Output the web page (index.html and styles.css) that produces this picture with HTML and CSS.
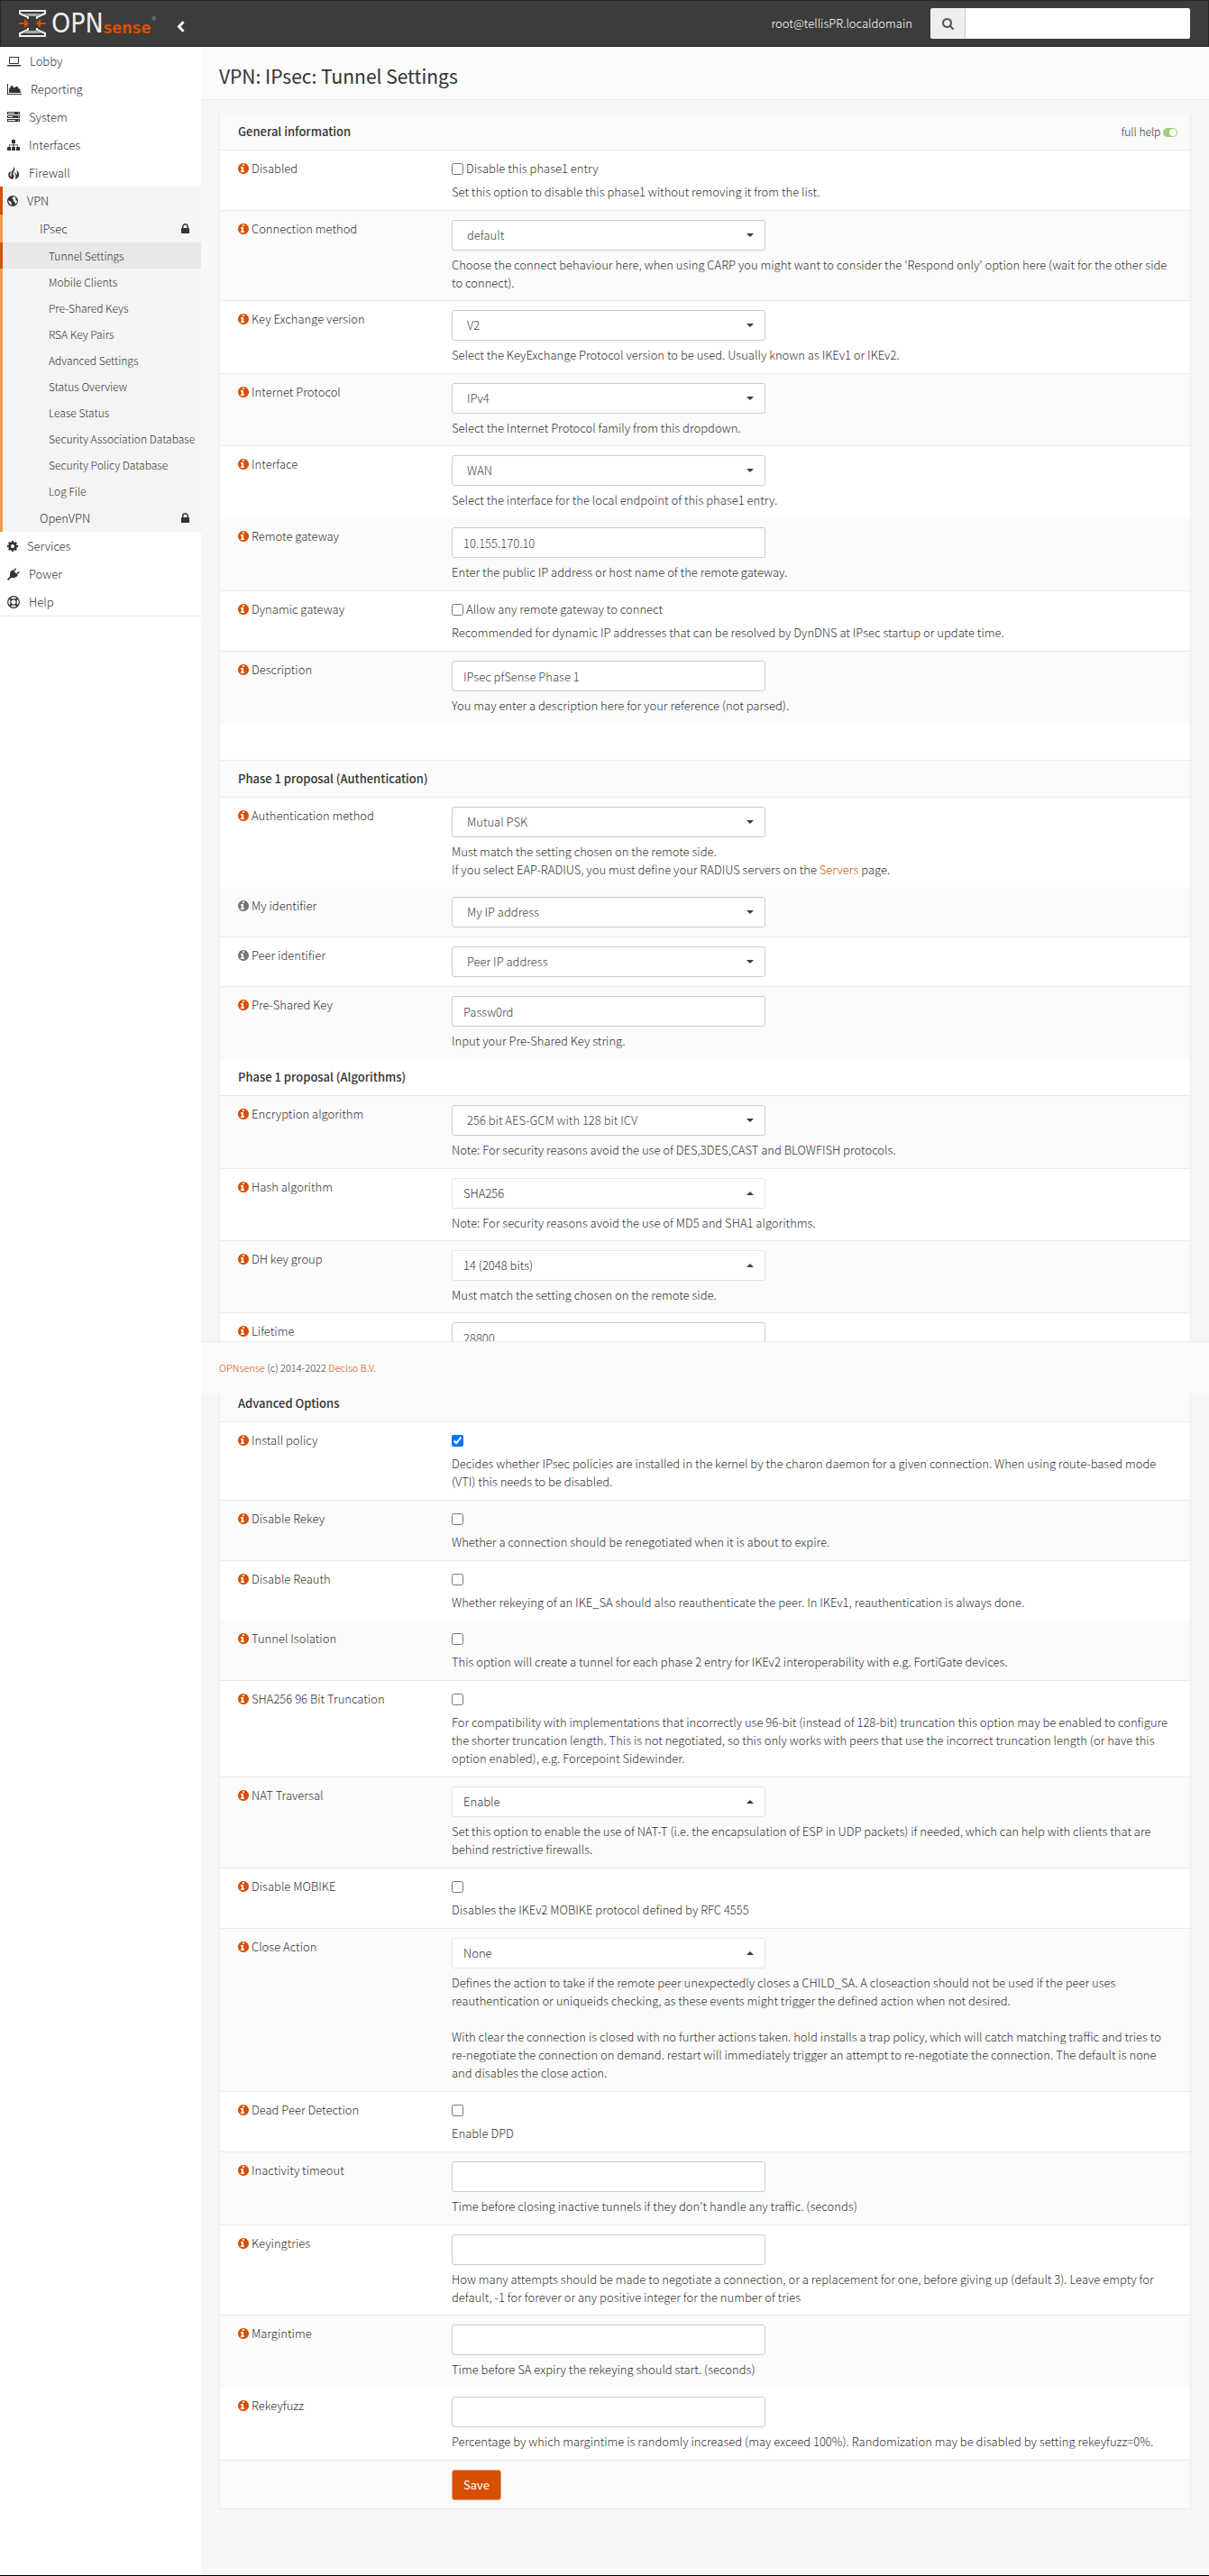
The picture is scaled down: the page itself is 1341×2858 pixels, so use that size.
FILE: index.html
```html
<!DOCTYPE html>
<html lang="en">
	<head>
		<meta charset="UTF-8">
		<meta name="viewport" content="width=device-width, initial-scale=1">

		<title>Tunnel Settings | IPsec | VPN | OPNsense</title>

		<link rel="stylesheet" href="styles.css">
	</head>

	<body>
		<!-- icon sprite -->
		<svg class="sprite" xmlns="http://www.w3.org/2000/svg">
			<symbol id="info" viewBox="128 128 1536 1536"><path d="M1024 1376v-160q0-14-9-23t-23-9h-96v-512q0-14-9-23t-23-9h-320q-14 0-23 9t-9 23v160q0 14 9 23t23 9h96v320h-96q-14 0-23 9t-9 23v160q0 14 9 23t23 9h448q14 0 23-9t9-23zM1024 480v-160q0-14-9-23t-23-9h-192q-14 0-23 9t-9 23v160q0 14 9 23t23 9h192q14 0 23-9t9-23zM1664 896q0 209-103 385.500t-279.500 279.500-385.500 103-385.500-103-279.500-279.500-103-385.500 103-385.500 279.500-279.500 385.500-103 385.500 103 279.500 279.500 103 385.500z"/></symbol>
			<symbol id="lock" viewBox="320 128 1152 1408"><path d="M640 768h512v-192q0-106-75-181t-181-75-181 75-75 181v192zM1472 864v576q0 40-28 68t-68 28h-960q-40 0-68-28t-28-68v-576q0-40 28-68t68-28h32v-192q0-184 132-316t316-132 316 132 132 316v192h32q40 0 68 28t28 68z"/></symbol>
			<symbol id="search" viewBox="64 128 1664 1664"><path d="M1216 832q0-185-131.500-316.500t-316.500-131.500-316.500 131.500-131.500 316.500 131.500 316.500 316.500 131.500 316.500-131.500 131.500-316.500zM1728 1664q0 52-38 90t-90 38q-54 0-90-38l-343-342q-179 124-399 124-143 0-273.500-55.500t-225-150-150-225-55.500-273.500 55.500-273.500 150-225 225-150 273.500-55.500 273.500 55.500 225 150 150 225 55.500 273.500q0 220-124 399l343 343q37 37 37 90z"/></symbol>
			<symbol id="cog" viewBox="128 128 1536 1536"><path d="M1152 896q0-106-75-181t-181-75-181 75-75 181 75 181 181 75 181-75 75-181zM1664 787v222q0 12-8 23t-20 13l-185 28q-19 54-39 91 35 50 107 138 10 12 10 25t-9 23q-27 37-99 108t-94 71q-12 0-26-9l-138-108q-44 23-91 38-16 136-29 186-7 28-36 28h-222q-14 0-24.500-8.500t-11.500-21.500l-28-184q-49-16-90-37l-141 107q-10 9-25 9-14 0-25-11-126-114-165-168-7-10-7-23 0-12 8-23 15-21 51-66.500t54-70.500q-27-50-41-99l-183-27q-13-2-21-12.500t-8-23.500v-222q0-12 8-23t19-13l186-28q14-46 39-92-40-57-107-138-10-12-10-24 0-10 9-23 26-36 98.500-107.500t94.500-71.500q13 0 26 10l138 107q44-23 91-38 16-136 29-186 7-28 36-28h222q14 0 24.500 8.500t11.500 21.500l28 184q49 16 90 37l142-107q9-9 24-9 13 0 25 10 129 119 165 170 7 8 7 22 0 12-8 23-15 21-51 66.500t-54 70.500q26 50 41 98l183 28q13 2 21 12.500t8 23.500z"/></symbol>
			<symbol id="laptop" viewBox="0 0 15 12"><path fill-rule="evenodd" d="M3 1h9a1 1 0 0 1 1 1v6a1 1 0 0 1-1 1H3a1 1 0 0 1-1-1V2a1 1 0 0 1 1-1zm0 1v6h9V2zM0 10h15v1q0 .6-1 .6H1Q0 11.600 0 11z"/></symbol>
			<symbol id="chart" viewBox="0 0 16 12"><path d="M0 0h1v11h15v1H0zM2 10V6l3-4.500L7.500 4.500 11 2.500l2 3h1L15 10z"/></symbol>
			<symbol id="server" viewBox="0 0 14 11"><path fill-rule="evenodd" d="M0 0h14v3H0zm1 1v1h7V1zm11 0v1h1V1zM0 4h14v3H0zm1 1v1h5V5zm11 0v1h1V5zM0 8h14v3H0zm1 1v1h8V9zm11 0v1h1V9z"/></symbol>
			<symbol id="sitemap" viewBox="0 0 14 12"><path d="M5 .5Q5 0 5.500 0h3q.5 0 .5.500v3q0 .5-.5.500h-1v1.500H12V8h1.500q.5 0 .5.500v3q0 .5-.5.500h-3q-.5 0-.5-.5v-3q0-.5.5-.5h.8V6.200H7.500V8h1q.5 0 .5.500v3q0 .5-.5.500h-3q-.5 0-.5-.5v-3q0-.5.500-.5h1V6.200H2.700V8h.8q.5 0 .5.500v3q0 .5-.5.500h-3q-.5 0-.5-.5v-3Q0 8 .5 8H2V5.500h4.500V4h-1Q5 4 5 3.500z"/></symbol>
			<symbol id="fire" viewBox="0 0 14 14"><path d="M7.200 0c2 2 1.300 3.600.2 5C6.300 6.500 6 8 7.500 9.800 7.800 11.500 7 13 5.500 14 2.500 13 1 11 1.200 8.700 1.400 7 2.500 6 3 4.500c1 1.500.6 2.800.2 3.900-.4 1.300.3 2.300 1.300 2.800C5 9.500 4 8 4.700 6 5.400 4.100 7.800 3 7.200 0zM10 3.500c2.500 2 3.500 4 3 6.200-.5 2.200-2.200 3.500-4.500 4.300.6-1.200 1.200-2.600.8-4.300C9 8.200 7.500 7.500 8.800 5.500c.2 1.800 1.200 2.300 1.400 4 1.300-2 .8-3.800-.2-6z"/></symbol>
			<symbol id="globe" viewBox="0 0 12 12"><path fill-rule="evenodd" d="M6 0a6 6 0 1 1 0 12A6 6 0 0 1 6 0zm.8 1.200L5.200 2.700 6 4l1.200.5L6.600 6l1.600 1 .9 1.200L8.500 10c1.500-.8 2.400-2.300 2.400-4L9.600 5 9 3.200l.8-.7c-.8-.8-1.800-1.200-3-1.300zM1.300 4.700l.2 2.600L3.700 10l1.500.9L4.600 9l.3-1.500L3 6.400z"/></symbol>
			<symbol id="plug" viewBox="0 0 14 14"><path d="M9.300.3l.9.9-2.600 2.700 2.500 2.500 2.700-2.600.9.900-2.600 2.700.8.800-1.300 1.300c-1.600 1.600-4 2-5.900 1.200L1.200 14 0 12.800l3.300-3.500C2.500 7.400 2.900 5 4.500 3.400L5.800 2.100l.8.800z"/></symbol>
			<symbol id="help" viewBox="0 0 14 14"><g fill="none" stroke="currentColor"><circle cx="7" cy="7" r="6.300" stroke-width="1.200"/><circle cx="7" cy="7" r="3.200" stroke-width="1.200"/><path stroke-width="2.200" d="M2.900 2.900l2 2M9.100 9.100l2 2M11.100 2.900l-2 2M4.900 9.100l-2 2"/></g></symbol>
			<symbol id="toggle" viewBox="0 0 16 10"><rect width="16" height="10" rx="5"/><circle cx="11" cy="5" r="4" fill="#fff"/></symbol>
		</svg>

		<header class="page-head">
			<a href="#" class="logo" aria-label="OPNsense">
				<svg class="logo-mark" viewBox="0 0 30 30">
					<path fill="#a9a9a8" d="M5 4h20l-6 3h-8zM11 23h8l6 3H5z"/>
					<path fill="none" stroke="#eee" stroke-width="2" d="M20 10V8l9-4V1H1v3l9 4v2M20 20v2l9 4v3H1v-3l9-4v-2"/>
					<path fill="#d94f00" d="M0 14h6v-4l5 5-5 5v-4H0zM30 14h-6v-4l-5 5 5 5v-4h6z"/>
				</svg>
				<span class="logo-opn">OPN</span><span class="logo-sense">sense</span><span class="logo-reg">®</span>
			</a>
			<button type="button" class="toggle-sidebar" aria-label="Toggle sidebar">
				<svg width="9" height="13" viewBox="0 0 9 13"><path fill="none" stroke="#fff" stroke-width="3" d="M7.500 1.200L2.500 6.500l5 5.300"/></svg>
			</button>
			<span class="user">root@tellisPR.localdomain</span>
			<div class="search">
				<label for="menu-search"><svg class="icon" width="13" height="13"><use href="#search"/></svg></label>
				<input type="text" id="menu-search" aria-label="Search">
			</div>
		</header>

		<div class="page-wrapper">
			<nav class="sidebar">
				<a href="#" class="item"><svg class="icon" width="15" height="12"><use href="#laptop"/></svg>Lobby</a>
				<a href="#" class="item"><svg class="icon" width="16" height="12"><use href="#chart"/></svg>Reporting</a>
				<a href="#" class="item"><svg class="icon" width="14" height="11"><use href="#server"/></svg>System</a>
				<a href="#" class="item"><svg class="icon" width="14" height="12"><use href="#sitemap"/></svg>Interfaces</a>
				<a href="#" class="item"><svg class="icon" width="14" height="14"><use href="#fire"/></svg>Firewall</a>
				<a href="#" class="item active"><svg class="icon" width="12" height="12"><use href="#globe"/></svg>VPN</a>
				<div class="submenu">
					<a href="#" class="item sub">IPsec<svg class="icon" width="9" height="11"><use href="#lock"/></svg></a>
					<a href="#" class="item leaf active">Tunnel Settings</a>
					<a href="#" class="item leaf">Mobile Clients</a>
					<a href="#" class="item leaf">Pre-Shared Keys</a>
					<a href="#" class="item leaf">RSA Key Pairs</a>
					<a href="#" class="item leaf">Advanced Settings</a>
					<a href="#" class="item leaf">Status Overview</a>
					<a href="#" class="item leaf">Lease Status</a>
					<a href="#" class="item leaf">Security Association Database</a>
					<a href="#" class="item leaf">Security Policy Database</a>
					<a href="#" class="item leaf">Log File</a>
					<a href="#" class="item sub">OpenVPN<svg class="icon" width="9" height="11"><use href="#lock"/></svg></a>
				</div>
				<a href="#" class="item"><svg class="icon" width="12" height="12"><use href="#cog"/></svg>Services</a>
				<a href="#" class="item"><svg class="icon" width="14" height="14"><use href="#plug"/></svg>Power</a>
				<a href="#" class="item"><svg class="icon" width="14" height="14"><use href="#help"/></svg>Help</a>
			</nav>

			<main class="page-content">
				<div class="content-head">
					<h1>VPN: IPsec: Tunnel Settings</h1>
				</div>

				<form class="content-box" action="#">
					<!-- phase 1 -->
					<section class="form-table">
						<div class="row heading">
							<h2>General information</h2>
							<a href="#" class="full-help">full help <svg width="16" height="10"><use href="#toggle"/></svg></a>
						</div>
						<div class="row">
							<div class="name"><a href="#" class="showhelp" aria-label="Help"><svg class="icon" width="12" height="12"><use href="#info"/></svg></a>Disabled</div>
							<div class="field">
								<label class="check"><input type="checkbox">Disable this phase1 entry</label>
								<p>Set this option to disable this phase1 without removing it from the list.</p>
							</div>
						</div>
						<div class="row slim">
							<div class="name"><a href="#" class="showhelp" aria-label="Help"><svg class="icon" width="12" height="12"><use href="#info"/></svg></a><label for="auto">Connection method</label></div>
							<div class="field">
								<select id="auto" class="picker"><option>default</option></select>
								<p>Choose the connect behaviour here, when using CARP you might want to consider the 'Respond only' option here (wait for the other side to connect).</p>
							</div>
						</div>
						<div class="row">
							<div class="name"><a href="#" class="showhelp" aria-label="Help"><svg class="icon" width="12" height="12"><use href="#info"/></svg></a><label for="iketype">Key Exchange version</label></div>
							<div class="field">
								<select id="iketype" class="picker"><option>V2</option></select>
								<p>Select the KeyExchange Protocol version to be used. Usually known as IKEv1 or IKEv2.</p>
							</div>
						</div>
						<div class="row slim">
							<div class="name"><a href="#" class="showhelp" aria-label="Help"><svg class="icon" width="12" height="12"><use href="#info"/></svg></a><label for="protocol">Internet Protocol</label></div>
							<div class="field">
								<select id="protocol" class="picker"><option>IPv4</option></select>
								<p>Select the Internet Protocol family from this dropdown.</p>
							</div>
						</div>
						<div class="row">
							<div class="name"><a href="#" class="showhelp" aria-label="Help"><svg class="icon" width="12" height="12"><use href="#info"/></svg></a><label for="interface">Interface</label></div>
							<div class="field">
								<select id="interface" class="picker"><option>WAN</option></select>
								<p>Select the interface for the local endpoint of this phase1 entry.</p>
							</div>
						</div>
						<div class="row no-line">
							<div class="name"><a href="#" class="showhelp" aria-label="Help"><svg class="icon" width="12" height="12"><use href="#info"/></svg></a><label for="remotegw">Remote gateway</label></div>
							<div class="field">
								<input type="text" id="remotegw" value="10.155.170.10">
								<p>Enter the public IP address or host name of the remote gateway.</p>
							</div>
						</div>
						<div class="row">
							<div class="name"><a href="#" class="showhelp" aria-label="Help"><svg class="icon" width="12" height="12"><use href="#info"/></svg></a>Dynamic gateway</div>
							<div class="field">
								<label class="check"><input type="checkbox">Allow any remote gateway to connect</label>
								<p>Recommended for dynamic IP addresses that can be resolved by DynDNS at IPsec startup or update time.</p>
							</div>
						</div>
						<div class="row">
							<div class="name"><a href="#" class="showhelp" aria-label="Help"><svg class="icon" width="12" height="12"><use href="#info"/></svg></a><label for="descr">Description</label></div>
							<div class="field">
								<input type="text" id="descr" value="IPsec pfSense Phase 1">
								<p>You may enter a description here for your reference (not parsed).</p>
							</div>
						</div>
						<div class="row heading no-line"></div>
						<div class="row heading">
							<h2>Phase 1 proposal (Authentication)</h2>
						</div>
						<div class="row">
							<div class="name"><a href="#" class="showhelp" aria-label="Help"><svg class="icon" width="12" height="12"><use href="#info"/></svg></a><label for="authmethod">Authentication method</label></div>
							<div class="field">
								<select id="authmethod" class="picker"><option>Mutual PSK</option></select>
								<p>Must match the setting chosen on the remote side.<br>If you select EAP-RADIUS, you must define your RADIUS servers on the <a href="#">Servers</a> page.</p>
							</div>
						</div>
						<div class="row no-line">
							<div class="name"><svg class="icon muted" width="12" height="12"><use href="#info"/></svg><label for="myid">My identifier</label></div>
							<div class="field">
								<select id="myid" class="picker"><option>My IP address</option></select>
							</div>
						</div>
						<div class="row">
							<div class="name"><svg class="icon muted" width="12" height="12"><use href="#info"/></svg><label for="peerid">Peer identifier</label></div>
							<div class="field">
								<select id="peerid" class="picker"><option>Peer IP address</option></select>
							</div>
						</div>
						<div class="row">
							<div class="name"><a href="#" class="showhelp" aria-label="Help"><svg class="icon" width="12" height="12"><use href="#info"/></svg></a><label for="psk">Pre-Shared Key</label></div>
							<div class="field">
								<input type="text" id="psk" value="Passw0rd">
								<p>Input your Pre-Shared Key string.</p>
							</div>
						</div>
						<div class="row heading no-line">
							<h2>Phase 1 proposal (Algorithms)</h2>
						</div>
						<div class="row">
							<div class="name"><a href="#" class="showhelp" aria-label="Help"><svg class="icon" width="12" height="12"><use href="#info"/></svg></a><label for="ealgo">Encryption algorithm</label></div>
							<div class="field">
								<select id="ealgo" class="picker"><option>256 bit AES-GCM with 128 bit ICV</option></select>
								<p>Note: For security reasons avoid the use of DES,3DES,CAST and BLOWFISH protocols.</p>
							</div>
						</div>
						<div class="row slim">
							<div class="name"><a href="#" class="showhelp" aria-label="Help"><svg class="icon" width="12" height="12"><use href="#info"/></svg></a><label for="halgo">Hash algorithm</label></div>
							<div class="field">
								<select id="halgo"><option>SHA256</option></select>
								<p>Note: For security reasons avoid the use of MD5 and SHA1 algorithms.</p>
							</div>
						</div>
						<div class="row slim">
							<div class="name"><a href="#" class="showhelp" aria-label="Help"><svg class="icon" width="12" height="12"><use href="#info"/></svg></a><label for="dhgroup">DH key group</label></div>
							<div class="field">
								<select id="dhgroup"><option>14 (2048 bits)</option></select>
								<p>Must match the setting chosen on the remote side.</p>
							</div>
						</div>
						<div class="row">
							<div class="name"><a href="#" class="showhelp" aria-label="Help"><svg class="icon" width="12" height="12"><use href="#info"/></svg></a><label for="lifetime">Lifetime</label></div>
							<div class="field">
								<input type="text" id="lifetime" value="28800">
								<p>&nbsp;</p>
							</div>
						</div>
					</section>

					<!-- sticks over the form -->
					<footer class="page-foot">
						<a href="#">OPNsense</a> (c) 2014-2022 <a href="#">Deciso B.V.</a>
					</footer>

					<!-- advanced -->
					<section class="form-table">
						<div class="row heading no-line">
							<h2>Advanced Options</h2>
						</div>
						<div class="row">
							<div class="name"><a href="#" class="showhelp" aria-label="Help"><svg class="icon" width="12" height="12"><use href="#info"/></svg></a><label for="installpolicy">Install policy</label></div>
							<div class="field">
								<div class="check"><input type="checkbox" id="installpolicy" checked></div>
								<p>Decides whether IPsec policies are installed in the kernel by the charon daemon for a given connection. When using route-based mode (VTI) this needs to be disabled.</p>
							</div>
						</div>
						<div class="row">
							<div class="name"><a href="#" class="showhelp" aria-label="Help"><svg class="icon" width="12" height="12"><use href="#info"/></svg></a><label for="rekey">Disable Rekey</label></div>
							<div class="field">
								<div class="check"><input type="checkbox" id="rekey"></div>
								<p>Whether a connection should be renegotiated when it is about to expire.</p>
							</div>
						</div>
						<div class="row">
							<div class="name"><a href="#" class="showhelp" aria-label="Help"><svg class="icon" width="12" height="12"><use href="#info"/></svg></a><label for="reauth">Disable Reauth</label></div>
							<div class="field">
								<div class="check"><input type="checkbox" id="reauth"></div>
								<p>Whether rekeying of an IKE_SA should also reauthenticate the peer. In IKEv1, reauthentication is always done.</p>
							</div>
						</div>
						<div class="row no-line">
							<div class="name"><a href="#" class="showhelp" aria-label="Help"><svg class="icon" width="12" height="12"><use href="#info"/></svg></a><label for="isolation">Tunnel Isolation</label></div>
							<div class="field">
								<div class="check"><input type="checkbox" id="isolation"></div>
								<p>This option will create a tunnel for each phase 2 entry for IKEv2 interoperability with e.g. FortiGate devices.</p>
							</div>
						</div>
						<div class="row">
							<div class="name"><a href="#" class="showhelp" aria-label="Help"><svg class="icon" width="12" height="12"><use href="#info"/></svg></a><label for="sha96">SHA256 96 Bit Truncation</label></div>
							<div class="field">
								<div class="check"><input type="checkbox" id="sha96"></div>
								<p>For compatibility with implementations that incorrectly use 96-bit (instead of 128-bit) truncation this option may be enabled to configure the shorter truncation length. This is not negotiated, so this only works with peers that use the incorrect truncation length (or have this option enabled), e.g. Forcepoint Sidewinder.</p>
							</div>
						</div>
						<div class="row">
							<div class="name"><a href="#" class="showhelp" aria-label="Help"><svg class="icon" width="12" height="12"><use href="#info"/></svg></a><label for="nat">NAT Traversal</label></div>
							<div class="field">
								<select id="nat"><option>Enable</option></select>
								<p>Set this option to enable the use of NAT-T (i.e. the encapsulation of ESP in UDP packets) if needed, which can help with clients that are behind restrictive firewalls.</p>
							</div>
						</div>
						<div class="row">
							<div class="name"><a href="#" class="showhelp" aria-label="Help"><svg class="icon" width="12" height="12"><use href="#info"/></svg></a><label for="mobike">Disable MOBIKE</label></div>
							<div class="field">
								<div class="check"><input type="checkbox" id="mobike"></div>
								<p>Disables the IKEv2 MOBIKE protocol defined by RFC 4555</p>
							</div>
						</div>
						<div class="row">
							<div class="name"><a href="#" class="showhelp" aria-label="Help"><svg class="icon" width="12" height="12"><use href="#info"/></svg></a><label for="closeaction">Close Action</label></div>
							<div class="field">
								<select id="closeaction"><option>None</option></select>
								<p>Defines the action to take if the remote peer unexpectedly closes a CHILD_SA. A closeaction should not be used if the peer uses reauthentication or uniqueids checking, as these events might trigger the defined action when not desired.<br><br>With clear the connection is closed with no further actions taken. hold installs a trap policy, which will catch matching traffic and tries to re-negotiate the connection on demand. restart will immediately trigger an attempt to re-negotiate the connection. The default is none and disables the close action.</p>
							</div>
						</div>
						<div class="row">
							<div class="name"><a href="#" class="showhelp" aria-label="Help"><svg class="icon" width="12" height="12"><use href="#info"/></svg></a><label for="dpd">Dead Peer Detection</label></div>
							<div class="field">
								<div class="check"><input type="checkbox" id="dpd"></div>
								<p>Enable DPD</p>
							</div>
						</div>
						<div class="row">
							<div class="name"><a href="#" class="showhelp" aria-label="Help"><svg class="icon" width="12" height="12"><use href="#info"/></svg></a><label for="inactivity">Inactivity timeout</label></div>
							<div class="field">
								<input type="text" id="inactivity">
								<p>Time before closing inactive tunnels if they don't handle any traffic. (seconds)</p>
							</div>
						</div>
						<div class="row slim">
							<div class="name"><a href="#" class="showhelp" aria-label="Help"><svg class="icon" width="12" height="12"><use href="#info"/></svg></a><label for="keyingtries">Keyingtries</label></div>
							<div class="field">
								<input type="text" id="keyingtries">
								<p>How many attempts should be made to negotiate a connection, or a replacement for one, before giving up (default 3). Leave empty for default, -1 for forever or any positive integer for the number of tries</p>
							</div>
						</div>
						<div class="row">
							<div class="name"><a href="#" class="showhelp" aria-label="Help"><svg class="icon" width="12" height="12"><use href="#info"/></svg></a><label for="margintime">Margintime</label></div>
							<div class="field">
								<input type="text" id="margintime">
								<p>Time before SA expiry the rekeying should start. (seconds)</p>
							</div>
						</div>
						<div class="row no-line">
							<div class="name"><a href="#" class="showhelp" aria-label="Help"><svg class="icon" width="12" height="12"><use href="#info"/></svg></a><label for="rekeyfuzz">Rekeyfuzz</label></div>
							<div class="field">
								<input type="text" id="rekeyfuzz">
								<p>Percentage by which margintime is randomly increased (may exceed 100%). Randomization may be disabled by setting rekeyfuzz=0%.</p>
							</div>
						</div>
						<div class="row slim">
							<div class="name"></div>
							<div class="field"><button type="submit" class="btn">Save</button></div>
						</div>
					</section>
				</form>
			</main>
		</div>
	</body>
</html>
```

FILE: styles.css
```css
* { box-sizing: border-box; }
body {
	display: flex;
	flex-direction: column;
	min-height: 100vh;
	margin: 0;
	border-bottom: 1px solid #000;
	background: #fff;
	color: #333;
	font: 300 13px/20px "Noto Sans CJK SC", "Open Sans", sans-serif;
}
a { color: #d94f00; text-decoration: none; }
h1, h2, p { margin: 0; }
h1 { font-size: 21px; line-height: 24px; font-weight: 400; }
h2 { font-size: 13px; line-height: 20px; font-weight: 500; }
input, select, button { font: inherit; color: inherit; }
.sprite { display: none; }
.icon { flex: none; fill: currentColor; }

/* top bar */
.page-head {
	display: flex;
	align-items: center;
	height: 52px;
	padding: 0 20px;
	border: 1px solid #262626;
	background: #3c3c3b;
	color: #fff;
}
.logo { display: flex; flex: none; align-items: center; width: 151px; height: 30px; font-family: "DejaVu Sans Condensed", "DejaVu Sans", sans-serif; }
.logo-mark { flex: none; width: 30px; height: 30px; margin-right: 6px; }
.logo-opn { color: #eee; font-size: 30px; line-height: 30px; }
.logo-sense { align-self: flex-end; color: #d94f00; font-size: 18px; line-height: 20px; font-weight: bold; }
.logo-reg { align-self: flex-start; color: #999; font-size: 7px; line-height: 20px; }
.toggle-sidebar { display: flex; margin: 6px auto 0 24px; padding: 0; border: 0; background: none; cursor: pointer; }
.user { margin-right: 20px; }
.search { display: flex; width: 288px; height: 34px; border-radius: 3px; background: #fff; overflow: hidden; }
.search label {
	display: flex;
	align-items: center;
	justify-content: center;
	flex: none;
	width: 39px;
	border-right: 1px solid #ccc;
	background: #eee;
	color: #555;
}
.search input { flex: 1; min-width: 0; padding: 0 12px; border: 0; background: #fff; color: #555; }

.page-wrapper { display: flex; flex: 1; }

/* menu */
.sidebar { flex: none; align-self: flex-start; width: 223px; border-bottom: 1px solid #e8e8e8; }
.item { display: flex; align-items: center; gap: 10px; height: 31px; padding: 0 8px; color: #333; }
.item.active { padding-left: 5px; border-left: 3px solid #d94f00; background: #f4f4f4; }
.submenu { background: #f4f4f4; }
.submenu .item { border-left: 3px solid #f29a4f; }
.submenu .sub { justify-content: space-between; padding: 0 13px 0 41px; }
.submenu .leaf { height: 29px; padding: 0 0 0 51px; font-size: 12px; }
.submenu .leaf.active { border-color: #d94f00; background: #e8e8e8; }

/* content */
.page-content { flex: 1; min-width: 0; padding-bottom: 73px; background: #f7f7f7; }
.content-head { height: 59px; padding: 20px; border-bottom: 1px solid #eaeaea; background: #fbfbfb; }
.content-box { margin: 15px 20px 0; }
.form-table { border: 1px solid #ebebeb; border-width: 0 1px; }
.form-table:last-child { border-bottom-width: 1px; }
.row { display: flex; padding: 10px 20px; border-top: 1px solid #ebebeb; background: #fff; }
.row:nth-child(odd) { background: #fbfbfb; }
.row:first-child, .row.no-line { border-top: 0; }
.row.slim { padding-bottom: 9px; }
.row.heading { justify-content: space-between; min-height: 40px; }
.full-help { padding-right: 14px; margin-right: -20px; color: #333; font-size: 12px; }
.full-help svg { fill: #9bd275; vertical-align: -1px; }
.name { display: flex; align-items: center; flex: none; gap: 3px; width: 237px; height: 20px; }
.showhelp { display: flex; }
.muted { color: #777; }
.field { flex: 1; min-width: 0; }
.field p { max-width: 798px; margin-top: 6px; }
.check { display: flex; align-items: center; gap: 3px; height: 20px; }
.check input { width: 13px; height: 13px; margin: 0; }
.field input[type=text], .field select {
	display: block;
	width: 100%;
	max-width: 348px;
	height: 34px;
	padding: 0 12px;
	border: 1px solid #ccc;
	border-radius: 3px;
	background-color: #fff;
	color: #444;
}
.field select {
	appearance: none;
	border-color: #e5e5e5;
	color: #333;
	background-image: url("data:image/svg+xml,%3Csvg xmlns='http://www.w3.org/2000/svg' width='8' height='4'%3E%3Cpath fill='%233c3c3b' d='M0 4l4-4 4 4z'/%3E%3C/svg%3E");
	background-repeat: no-repeat;
	background-position: right 12px center;
}
.field select.picker {
	padding-left: 16px;
	border-color: #ccc;
	color: #444;
	background-image: url("data:image/svg+xml,%3Csvg xmlns='http://www.w3.org/2000/svg' width='8' height='4'%3E%3Cpath fill='%233c3c3b' d='M0 0h8L4 4z'/%3E%3C/svg%3E");
}
.btn { display: block; height: 34px; padding: 0 12px; border: 1px solid #e8a27c; border-radius: 3px; background: #d94f00; color: #fff; font-weight: 400; cursor: pointer; }

/* footer lies over the form */
.page-foot {
	position: relative;
	height: 58px;
	margin: -49px -20px -9px;
	padding: 18px 20px;
	border-top: 1px solid #ebebeb;
	background: #fbfbfb;
	font-size: 11px;
}
```
